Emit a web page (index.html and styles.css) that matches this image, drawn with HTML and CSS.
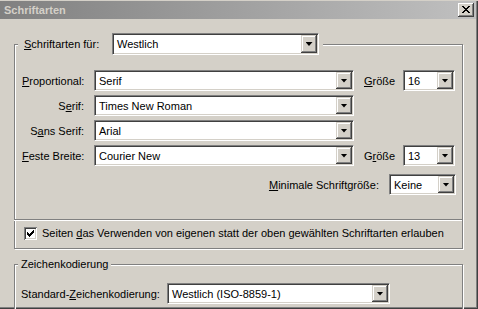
FILE: index.html
```html
<!DOCTYPE html>
<html lang="de">
<head>
<meta charset="utf-8">
<title>Schriftarten</title>
<link rel="stylesheet" href="styles.css">
</head>
<body>
<div class="window">
  <div class="titlebar">
    <span class="title">Schriftarten</span>
    <span class="close"><svg width="8" height="7" viewBox="0 0 8 7"><path d="M0 0h2v1H0zM6 0h2v1H6zM1 1h2v1H1zM5 1h2v1H5zM2 2h4v1H2zM3 3h2v1H3zM2 4h4v1H2zM1 5h2v1H1zM5 5h2v1H5zM0 6h2v1H0zM6 6h2v1H6z" fill="#000"/></svg></span>
  </div>
  <div class="content">
    <div class="group g1">
      <div class="legend-row">
        <span class="lbl-lang"><u>S</u>chriftarten für:</span>
        <div class="combo c-lang"><span class="val">Westlich</span><span class="btn"><i class="arrow"></i></span></div>
      </div>
      <div class="fonts">
        <span class="flabel"><u>P</u>roportional:</span>
        <div class="combo"><span class="val">Serif</span><span class="btn"><i class="arrow"></i></span></div>
        <span class="slabel"><u>G</u>röße</span>
        <div class="combo"><span class="val">16</span><span class="btn"><i class="arrow"></i></span></div>

        <span class="flabel">S<u>e</u>rif:</span>
        <div class="combo"><span class="val">Times New Roman</span><span class="btn"><i class="arrow"></i></span></div>
        <span></span><span></span>

        <span class="flabel">S<u>a</u>ns Serif:</span>
        <div class="combo"><span class="val">Arial</span><span class="btn"><i class="arrow"></i></span></div>
        <span></span><span></span>

        <span class="flabel"><u>F</u>este Breite:</span>
        <div class="combo"><span class="val">Courier New</span><span class="btn"><i class="arrow"></i></span></div>
        <span class="slabel">G<u>r</u>öße</span>
        <div class="combo"><span class="val">13</span><span class="btn"><i class="arrow"></i></span></div>
      </div>
      <div class="minrow">
        <span><u>M</u>inimale Schriftgröße:</span>
        <div class="combo c-min"><span class="val">Keine</span><span class="btn"><i class="arrow"></i></span></div>
      </div>
      <div class="divider"></div>
      <div class="checkrow">
        <span class="checkbox"><svg width="13" height="13" viewBox="0 0 13 13"><path d="M9 3h1v1H9zM8 4h2v1H8zM3 5h1v1H3zM7 5h3v1H7zM3 6h2v1H3zM6 6h3v1H6zM3 7h5v1H3zM4 8h3v1H4zM5 9h1v1H5z" fill="#000"/></svg></span>
        <span>Seiten <u>d</u>as Verwenden von eigenen statt der oben gewählten Schriftarten erlauben</span>
      </div>
    </div>
    <div class="group g2">
      <div class="legend">Zeichenkodierung</div>
      <div class="encrow">
        <span class="lbl-enc">Standard-<u>Z</u>eichenkodierung:</span>
        <div class="combo c-enc"><span class="val">Westlich (ISO-8859-1)</span><span class="btn"><i class="arrow"></i></span></div>
      </div>
    </div>
  </div>
</div>
</body>
</html>
```

FILE: styles.css
```css
html, body {
  margin: 0;
  padding: 0;
  background: #d4d0c8;
}
body {
  font-family: "Liberation Sans", Arial, sans-serif;
  font-size: 11px;
  color: #000;
}
.window {
  width: 478px;
  height: 309px;
  box-sizing: border-box;
  background: #d4d0c8;
  border-top: 1px solid #d4d0c8;
  box-shadow: inset -1px -1px 0 #404040, inset -2px -2px 0 #808080;
  overflow: hidden;
}
.titlebar {
  height: 18px;
  margin-right: 2px;
  padding: 0 2px 0 4px;
  background: linear-gradient(to right, #808080, #c0c0c0);
  display: flex;
  align-items: center;
  justify-content: space-between;
}
.title {
  color: #d4d0c8;
  font-weight: bold;
  font-size: 11px;
}
.close {
  width: 16px;
  height: 14px;
  background: #d4d0c8;
  box-shadow: inset -1px -1px 0 #404040, inset 1px 1px 0 #fff, inset -2px -2px 0 #808080;
  display: flex;
  align-items: center;
  justify-content: center;
}
.close svg { display: block; margin: 0 0 1px 0; }
.content {
  padding: 25px 0 0 14px;
}
.group {
  width: 449px;
  box-sizing: border-box;
  border: 1px solid #808080;
  box-shadow: inset 1px 1px 0 #fff, 1px 1px 0 #fff;
}
.g1 {
  padding: 0 6px 0 7px;
}
.legend-row {
  margin: -12px 0 0 -4px;
  padding: 0 4px 0 6px;
  background: #d4d0c8;
  display: inline-flex;
  align-items: center;
  vertical-align: top;
}
.lbl-lang {
  width: 88px;
}
.combo {
  height: 21px;
  box-sizing: border-box;
  background: #fff;
  border-top: 1px solid #808080;
  border-left: 1px solid #808080;
  border-right: 1px solid #fff;
  border-bottom: 1px solid #fff;
  box-shadow: inset 1px 1px 0 #404040, inset -1px -1px 0 #d4d0c8;
  display: flex;
  align-items: center;
  padding: 1px;
}
.c-lang { width: 207px; height: 22px; }
.c-min { width: 67px; }
.c-enc { width: 223px; }
.val {
  flex: 1;
  padding-left: 3px;
  white-space: nowrap;
  overflow: hidden;
}
.btn {
  width: 16px;
  align-self: stretch;
  background: #d4d0c8;
  box-shadow: inset -1px -1px 0 #404040, inset 1px 1px 0 #d4d0c8, inset -2px -2px 0 #808080, inset 2px 2px 0 #fff;
  display: flex;
  align-items: center;
  justify-content: center;
}
.arrow {
  display: block;
  width: 7px;
  height: 4px;
  background: #000;
  clip-path: polygon(0 0, 100% 0, 50% 100%);
}
.fonts {
  margin-top: 13px;
  display: grid;
  grid-template-columns: 62px 260px 29px 52px;
  column-gap: 10px;
  row-gap: 4px;
  grid-auto-rows: 21px;
  align-items: center;
}
.flabel {
  text-align: right;
  white-space: nowrap;
}
.slabel {
  white-space: nowrap;
}
.minrow {
  margin-top: 8px;
  display: flex;
  justify-content: flex-end;
  align-items: center;
  gap: 10px;
}
.divider {
  margin: 24px -6px 0 -8px;
  border-top: 1px solid #808080;
  border-bottom: 1px solid #fff;
}
.checkrow {
  height: 27px;
  box-sizing: border-box;
  padding: 6px 0 0 2px;
  display: flex;
  align-items: flex-start;
  gap: 5px;
}
.checkrow > span:last-child { line-height: 13px; }
.checkbox {
  width: 13px;
  height: 13px;
  box-sizing: border-box;
  background: #fff;
  flex: none;
  box-shadow: inset 1px 1px 0 #808080, inset -1px -1px 0 #fff, inset 2px 2px 0 #404040, inset -2px -2px 0 #d4d0c8;
}
.checkbox svg { display: block; }
.g2 {
  margin-top: 15px;
  padding: 0 6px 5px 6px;
}
.legend {
  display: inline-block;
  vertical-align: top;
  margin: -7px 0 0 -3px;
  padding: 0 3px;
  background: #d4d0c8;
  line-height: 13px;
}
.encrow {
  margin-top: 6px;
  display: flex;
  align-items: center;
}
.lbl-enc { width: 146px; white-space: nowrap; }
```
